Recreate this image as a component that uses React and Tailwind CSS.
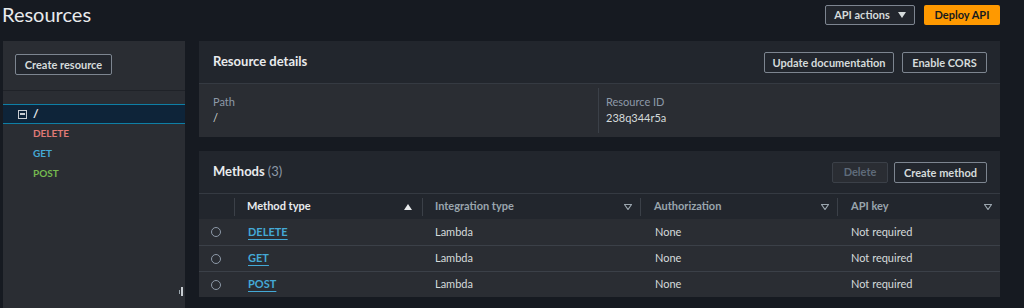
const font = { fontFamily: 'Lato, "Open Sans", sans-serif' };

function Btn({ children, className = "" }) {
  return (
    <button
      className={`h-[21px] whitespace-nowrap border border-[#7d8590] rounded-[2px] bg-[#22262d] text-[11px] font-bold text-[#d5dbdb] leading-none flex items-center justify-center ${className}`}
    >
      {children}
    </button>
  );
}

function Caret() {
  return (
    <svg width="8" height="6" viewBox="0 0 8 6" className="text-[#9aa5ad]">
      <path d="M0.5 0.5 L7.5 0.5 L4 5.5 Z" fill="none" stroke="currentColor" strokeWidth="1.2" />
    </svg>
  );
}

const methods = [
  { name: "DELETE", color: "text-[#e07a76]" },
  { name: "GET", color: "text-[#44a9d6]" },
  { name: "POST", color: "text-[#74b84f]" },
];

export default function App() {
  return (
    <div style={font} className="w-[1024px] h-[308px] overflow-hidden bg-[#161a21] text-[#d5dbdb]">
      {/* top bar */}
      <div className="h-[41px] flex items-start justify-between pr-[24px]">
        <h1 className="text-[20px] leading-none mt-[4px] ml-[2px] text-[#e9ebed]">Resources</h1>
        <div className="flex gap-[9px] mt-[5px]">
          <button className="h-[20px] w-[90px] whitespace-nowrap border border-[#7d8590] rounded-[2px] bg-[#22262d] text-[11px] font-bold text-[#d5dbdb] flex items-center justify-center gap-[8px]">
            API actions
            <svg width="8" height="6" viewBox="0 0 8 6">
              <path d="M0 0 L8 0 L4 6 Z" fill="#d5dbdb" />
            </svg>
          </button>
          <button className="h-[20px] w-[76px] whitespace-nowrap rounded-[2px] bg-[#ff9900] text-[11px] font-bold text-[#16191f] flex items-center justify-center">
            Deploy API
          </button>
        </div>
      </div>

      <div className="flex">
        {/* resource tree */}
        <div className="ml-[3px] w-[182px] h-[267px] bg-[#2a2d33] relative">
          <div className="pt-[13px] px-[12px]">
            <Btn className="w-[97px]">Create resource</Btn>
          </div>
          <div className="mt-[15px] h-px bg-[#1f2228]" />
          <div className="mt-[13px] h-[20px] bg-[#0e2439] border-y border-[#0e7fa6] flex items-center pl-[15px] gap-[6px]">
            <span className="w-[9px] h-[9px] border border-[#c8cdd2] flex items-center justify-center">
              <span className="w-[5px] h-[1.5px] bg-[#c8cdd2]" />
            </span>
            <span className="text-[12px] font-bold text-[#e9ebed] leading-none">/</span>
          </div>
          <div className="pl-[30px] -mt-[1px]">
            {methods.map((m) => (
              <div key={m.name} className={`h-[20px] flex items-center text-[10px] font-bold ${m.color}`}>
                {m.name}
              </div>
            ))}
          </div>
          <div className="absolute right-[2px] bottom-[12px] flex gap-[1px] items-center">
            <span className="w-[1px] h-[4px] bg-[#9aa5ad]" />
            <span className="w-[2px] h-[9px] bg-[#c8cdd2]" />
          </div>
        </div>

        {/* main column */}
        <div className="ml-[14px] w-[801px] flex flex-col gap-[14px]">
          {/* resource details */}
          <div className="bg-[#2a2d33]">
            <div className="h-[43px] bg-[#22262d] border-b border-[#353a42] flex items-center justify-between pl-[14px] pr-[13px]">
              <h2 className="text-[13px] font-bold text-[#e9ebed]">Resource details</h2>
              <div className="flex gap-[8px]">
                <Btn className="w-[130px]">Update documentation</Btn>
                <Btn className="w-[85px]">Enable CORS</Btn>
              </div>
            </div>
            <div className="h-[53px] flex py-[4px]">
              <div className="w-[400px] pl-[14px] pt-[6px] border-r border-[#3b4048]">
                <div className="text-[11px] text-[#8d99a8] leading-[16px]">Path</div>
                <div className="text-[11px] text-[#d5dbdb] leading-[16px]">/</div>
              </div>
              <div className="pl-[7px] pt-[6px]">
                <div className="text-[11px] text-[#8d99a8] leading-[16px]">Resource ID</div>
                <div className="text-[11px] text-[#d5dbdb] leading-[16px]">238q344r5a</div>
              </div>
            </div>
          </div>

          {/* methods */}
          <div className="bg-[#2a2d33]">
            <div className="h-[43px] bg-[#22262d] border-b border-[#353a42] flex items-center justify-between pl-[14px] pr-[13px]">
              <h2 className="text-[13px] font-bold text-[#e9ebed]">
                Methods <span className="font-normal text-[#8d99a8]">(3)</span>
              </h2>
              <div className="flex gap-[6px]">
                <button className="h-[21px] w-[56px] border border-[#3b4048] rounded-[2px] bg-[#2a2d33] text-[11px] font-bold text-[#5f6b7a] flex items-center justify-center">
                  Delete
                </button>
                <Btn className="w-[93px]">Create method</Btn>
              </div>
            </div>
            <div className="h-[25px] bg-[#22262d] flex items-center text-[11px] font-bold">
              <div className="w-[36px] h-[18px] border-r border-[#3b4048]" />
              <div className="w-[188px] h-[18px] border-r border-[#3b4048] flex items-center justify-between pl-[12px] pr-[10px] text-[#e9ebed]">
                Method type
                <svg width="8" height="6" viewBox="0 0 8 6">
                  <path d="M0 6 L8 6 L4 0 Z" fill="#e9ebed" />
                </svg>
              </div>
              <div className="w-[218px] h-[18px] border-r border-[#3b4048] flex items-center justify-between pl-[12px] pr-[8px] text-[#9aa5ad]">
                Integration type
                <Caret />
              </div>
              <div className="w-[197px] h-[18px] border-r border-[#3b4048] flex items-center justify-between pl-[13px] pr-[8px] text-[#9aa5ad]">
                Authorization
                <Caret />
              </div>
              <div className="flex-1 h-[18px] flex items-center justify-between pl-[13px] pr-[8px] text-[#9aa5ad]">
                API key
                <Caret />
              </div>
            </div>
            {methods.map((m, i) => (
              <div
                key={m.name}
                className={`h-[26px] flex items-center text-[11px] text-[#d5dbdb] ${i > 0 ? "border-t border-[#3b4048]" : ""}`}
              >
                <div className="w-[36px] pl-[12px] flex items-center">
                  <span className="w-[10px] h-[10px] rounded-full border-[1.5px] border-[#8d99a8]" />
                </div>
                <div className="w-[188px] pl-[13px]">
                  <span className="font-bold text-[#44a9d6] underline underline-offset-[3px] decoration-[1px]">{m.name}</span>
                </div>
                <div className="w-[218px] pl-[12px]">Lambda</div>
                <div className="w-[197px] pl-[14px]">None</div>
                <div className="flex-1 pl-[13px]">Not required</div>
              </div>
            ))}
          </div>
        </div>
      </div>
    </div>
  );
}
